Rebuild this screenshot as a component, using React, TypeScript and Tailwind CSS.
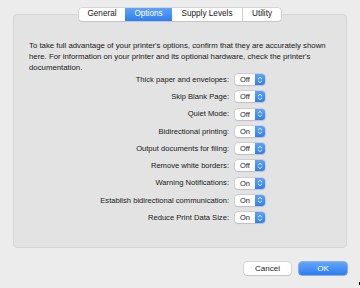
import React from "react";

const rows: { label: string; value: string }[] = [
  { label: "Thick paper and envelopes:", value: "Off" },
  { label: "Skip Blank Page:", value: "Off" },
  { label: "Quiet Mode:", value: "Off" },
  { label: "Bidirectional printing:", value: "On" },
  { label: "Output documents for filing:", value: "Off" },
  { label: "Remove white borders:", value: "Off" },
  { label: "Warning Notifications:", value: "On" },
  { label: "Establish bidirectional communication:", value: "On" },
  { label: "Reduce Print Data Size:", value: "On" },
];

const tabs = ["General", "Options", "Supply Levels", "Utility"];

function PopUp({ value }: { value: string }) {
  return (
    <div className="flex h-[11px] w-[30px] items-stretch rounded-[3px] bg-white shadow-[0_0_0_0.5px_#b9b9b9,0_1px_1px_rgba(0,0,0,0.12)]">
      <span className="flex-1 pl-[5px] text-[7.5px] leading-[11px] text-[#1a1a1a]">{value}</span>
      <span className="flex w-[10px] items-center justify-center rounded-r-[3px] bg-gradient-to-b from-[#5ea2f8] to-[#2f7ef0]">
        <svg width="6" height="8" viewBox="0 0 6 8" fill="none">
          <path d="M1.2 3 L3 1.3 L4.8 3" stroke="white" strokeWidth="0.9" strokeLinecap="round" strokeLinejoin="round" />
          <path d="M1.2 5 L3 6.7 L4.8 5" stroke="white" strokeWidth="0.9" strokeLinecap="round" strokeLinejoin="round" />
        </svg>
      </span>
    </div>
  );
}

export default function App() {
  return (
    <div
      className="relative flex h-[288px] w-[360px] flex-col bg-[#ececec] text-[#171717]"
      style={{ fontFamily: '"Liberation Sans", Arial, sans-serif' }}
    >
      {/* tab bar */}
      <div className="relative z-10 mt-[8px] flex justify-center">
        <div className="flex h-[13px] overflow-hidden rounded-[3px] bg-white shadow-[0_0_0_0.5px_#bdbdbd,0_1px_1px_rgba(0,0,0,0.1)]">
          {tabs.map((t, i) => (
            <div
              key={t}
              className={
                t === "Options"
                  ? "flex w-[47px] items-center justify-center bg-gradient-to-b from-[#5ea2f8] to-[#2f7ef0] text-[8.2px] text-white"
                  : i === 0
                  ? "flex w-[46px] items-center justify-center text-[8.2px]"
                  : t === "Utility"
                  ? "flex w-[39px] items-center justify-center border-l border-[#d0d0d0] text-[8.2px]"
                  : "flex w-[70px] items-center justify-center text-[8.2px]"
              }
            >
              {t}
            </div>
          ))}
        </div>
      </div>

      {/* panel */}
      <div className="mx-[13px] -mt-[7px] h-[234px] rounded-[4px] border border-[#d6d6d6] bg-[#e3e3e3] pl-[15px] pr-[8px] pt-[25px]">
        <p className="text-[7.8px] leading-[11px]">
          To take full advantage of your printer's options, confirm that they are accurately shown here. For information on your printer and its optional hardware, check the printer's documentation.
        </p>
        <div className="mt-[-2px] flex flex-col">
          {rows.map((r) => (
            <div key={r.label} className="flex h-[17.25px] items-center">
              <span className="w-[200px] text-right text-[7.6px]">{r.label}</span>
              <span className="ml-[6px]">
                <PopUp value={r.value} />
              </span>
            </div>
          ))}
        </div>
      </div>

      {/* buttons */}
      <div className="mt-[14px] flex justify-end gap-[8px] pr-[13px]">
        <button className="h-[13px] w-[47px] rounded-[3px] bg-white text-[8px] leading-[13px] text-[#222] shadow-[0_0_0_0.5px_#bdbdbd,0_1px_1px_rgba(0,0,0,0.12)]">
          Cancel
        </button>
        <button className="h-[13px] w-[48px] rounded-[3px] bg-gradient-to-b from-[#62a6fa] to-[#2d7cf1] text-[8px] leading-[13px] text-white shadow-[0_0_0_0.5px_#2f72d8]">
          OK
        </button>
      </div>

      <div className="absolute bottom-[3px] right-0 h-[3px] w-[1px] bg-black" />
    </div>
  );
}
